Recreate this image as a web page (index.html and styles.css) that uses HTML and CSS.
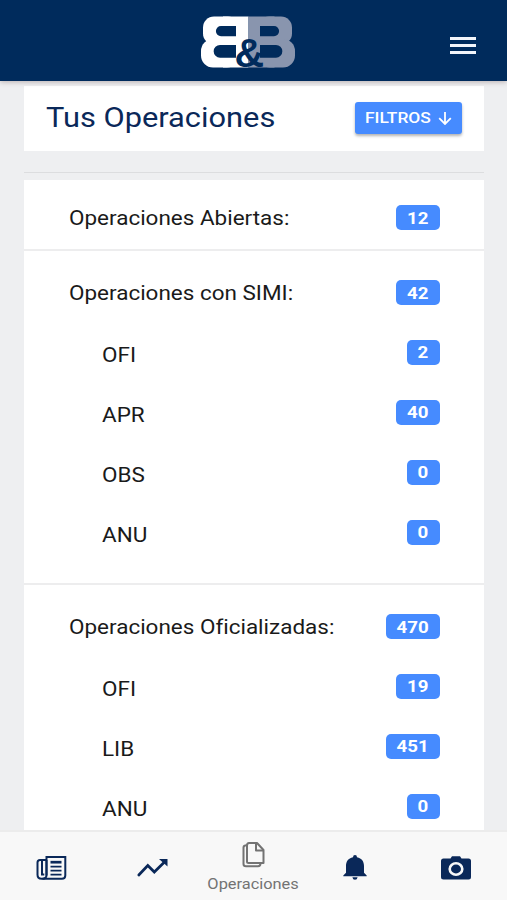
FILE: index.html
```html
<!DOCTYPE html>
<html lang="es">
<head>
<meta charset="utf-8">
<meta name="viewport" content="width=device-width, initial-scale=1">
<title>Tus Operaciones</title>
<link rel="stylesheet" href="styles.css">
</head>
<body>
<div class="app">
  <header class="header">
    <svg class="logo" viewBox="0 0 96 56" role="img" aria-label="B&amp;B">
      <g fill="#fff">
        <rect x="2" y="2.500" width="36" height="28" rx="11"/>
        <rect x="0" y="25" width="38" height="28.500" rx="12"/>
        <rect x="22" y="2.500" width="25.500" height="51"/>
      </g>
      <g fill="#8995ae">
        <rect x="57" y="2.500" width="34" height="28" rx="11"/>
        <rect x="57" y="25" width="37" height="28.500" rx="12"/>
        <rect x="47.500" y="2.500" width="26" height="51"/>
      </g>
      <g fill="#002b5c">
        <path d="M35 12H20a5 5 0 0 0 0 10.200h15zM35 31H19a6 6 0 0 0 0 12.700h16zM59 12H73a5 5 0 0 1 0 10.200H59zM59 31H75a6 6 0 0 1 0 12.700H59z"/>
      </g>
      <text class="logo-amp" x="33.500" y="53">&amp;</text>
    </svg>
    <button class="menu" aria-label="Menú"><span></span><span></span><span></span></button>
  </header>

  <main class="content">
    <section class="title-card">
      <h1><span class="wide">Tus Operaciones</span></h1>
      <button class="filter">
        <span class="filter-label"><span class="wide">FILTROS</span></span>
        <svg class="arrow" viewBox="0 0 14 14"><path d="M7 1v12M1.2 7.2 7 13l5.800-5.800"/></svg>
      </button>
    </section>
    <hr class="rule">
    <div class="list">
      <section class="group group-open">
        <div class="row head"><span class="wide">Operaciones Abiertas:</span><span class="badge two"><b class="wide">12</b></span></div>
      </section>
      <section class="group group-simi">
        <div class="row head"><span class="wide">Operaciones con SIMI:</span><span class="badge two"><b class="wide">42</b></span></div>
        <div class="row sub"><span class="wide">OFI</span><span class="badge one"><b class="wide">2</b></span></div>
        <div class="row sub"><span class="wide">APR</span><span class="badge two"><b class="wide">40</b></span></div>
        <div class="row sub"><span class="wide">OBS</span><span class="badge one"><b class="wide">0</b></span></div>
        <div class="row sub"><span class="wide">ANU</span><span class="badge one"><b class="wide">0</b></span></div>
      </section>
      <section class="group group-official">
        <div class="row head"><span class="wide">Operaciones Oficializadas:</span><span class="badge three"><b class="wide">470</b></span></div>
        <div class="row sub"><span class="wide">OFI</span><span class="badge two"><b class="wide">19</b></span></div>
        <div class="row sub"><span class="wide">LIB</span><span class="badge three"><b class="wide">451</b></span></div>
        <div class="row sub"><span class="wide">ANU</span><span class="badge one"><b class="wide">0</b></span></div>
      </section>
    </div>
  </main>

  <nav class="tabs">
    <a class="tab" aria-label="Noticias">
      <svg width="32" height="26" viewBox="0 0 32 26" fill="none" stroke="currentColor" stroke-width="2">
        <path d="M11.500 20.500V2h18.800v18.500q0 3.200-3.400 3.200H6.500q-4 0-4-4V7.500Q2.500 5 5 5h6.500"/>
        <path d="M7 5v14.500h2.300M11.500 5v15q0 3.700-4 3.700"/>
        <path d="M15.500 7.200h11" stroke-width="2.700"/>
        <path d="M15.500 11.700h11M15.500 15.700h11M15.500 19.700h11" stroke-width="1.700"/>
      </svg>
    </a>
    <a class="tab" aria-label="Tendencias">
      <svg width="32" height="26" viewBox="0 0 32 26">
        <path d="m2.800 20 9-9.500 6.500 6.500L28 7.500" fill="none" stroke="currentColor" stroke-width="2.700" stroke-linecap="round"/>
        <path d="M23 4h8.500v7.500z" fill="currentColor"/>
      </svg>
    </a>
    <a class="tab active">
      <svg width="26" height="28" viewBox="0 0 26 28" fill="none" stroke="currentColor" stroke-width="2" stroke-linejoin="round">
        <path d="M9 2H17l6.500 7v13H8.500q-1.500 0-1.500-1.500v-16Q7 2 9 2z"/>
        <path d="M16 2v7.500h7.500"/>
        <path d="M7 4.200Q3.500 4.200 3.500 6.500V23q0 2.300 2.500 2.300h12q2.500 0 2.500-3.300"/>
      </svg>
      <span class="tab-label"><span class="wide">Operaciones</span></span>
    </a>
    <a class="tab" aria-label="Notificaciones">
      <svg width="26" height="28" viewBox="0 0 26 28" fill="currentColor">
        <path d="M11 3.200q0-2.200 2-2.200t2 2.200c4.800 1 7 4.400 7 8.800v6.700l2.700 2.700v.8H1.300v-.8L4 18.700V12c0-4.400 2.200-7.800 7-8.800zM10.400 23.200h5.200q-.4 2.500-2.600 2.500t-2.600-2.500z"/>
      </svg>
    </a>
    <a class="tab" aria-label="Cámara">
      <svg width="32" height="26" viewBox="0 0 32 26">
        <path d="M3.500 3.500h7l1.500-2.200h8l1.500 2.200h7q2.500 0 2.500 2.500v16q0 2.500-2.500 2.500h-25Q1 24.500 1 22V6q0-2.500 2.500-2.500z" fill="currentColor"/>
        <ellipse cx="16" cy="14" rx="6.300" ry="5.700" fill="none" stroke="#f8f8f8" stroke-width="2.600"/>
      </svg>
    </a>
  </nav>
</div>
</body>
</html>
```

FILE: styles.css
```css
* { box-sizing: border-box; }

body {
  margin: 0;
  background: #eeeff1;
  font-family: Roboto, "Liberation Sans", sans-serif;
  font-variant-ligatures: none;
  color: #1a1a1a;
}

button {
  border: 0;
  padding: 0;
  font: inherit;
}

.app {
  display: flex;
  flex-direction: column;
  height: 900px;
  overflow: hidden;
}

.wide {
  display: inline-block;
  transform: scaleX(1.1);
  transform-origin: left center;
  white-space: nowrap;
}

.header {
  display: grid;
  grid-template-columns: 1fr 96px 1fr;
  align-items: center;
  flex: 0 0 81px;
  padding: 3px 31px 0 21px;
  background: #002b5c;
  box-shadow: 0 1px 5px rgba(60, 30, 30, .3);
  z-index: 1;
}

.logo {
  grid-column: 2;
  width: 96px;
  height: 56px;
  overflow: visible;
}

.logo-amp {
  font: bold 41px "Liberation Sans", sans-serif;
  fill: #002b5c;
}

.menu {
  justify-self: end;
  display: grid;
  gap: 4px;
  padding-top: 6px;
  background: none;
}

.menu span {
  width: 26px;
  height: 3px;
  background: #f2f5fa;
}

.content {
  flex: 1;
  min-height: 0;
  overflow: hidden;
  padding: 5px 23px 0 24px;
}

.title-card {
  display: flex;
  align-items: center;
  justify-content: space-between;
  height: 65px;
  padding: 0 22px 2px 22px;
  background: #fff;
}

h1 {
  margin: 0;
  font-size: 28px;
  font-weight: 400;
  line-height: 34px;
  color: #0a2859;
}

.filter {
  display: flex;
  align-items: center;
  justify-content: space-between;
  width: 107px;
  height: 32px;
  padding: 0 10px;
  border-radius: 3px;
  background: #468bff;
  color: #fff;
  font-size: 15px;
  font-weight: 500;
  box-shadow: 0 2px 3px rgba(0, 0, 0, .3);
}

.filter .wide { transform: scaleX(1.16); }

.arrow {
  width: 14px;
  height: 14px;
  fill: none;
  stroke: #fff;
  stroke-width: 1.8;
}

.rule {
  height: 1px;
  margin: 21px 0 7px;
  border: 0;
  background: #dcdddf;
}

.list { background: #fff; }

.group { border-bottom: 2px solid #ededee; }
.group-open { height: 71px; padding-top: 8px; }
.group-simi { height: 334px; padding-top: 12px; }
.group-official { padding-top: 12px; border-bottom: 0; }

.row {
  display: flex;
  align-items: center;
  justify-content: space-between;
  height: 60px;
  padding-right: 44.5px;
  font-size: 21px;
  line-height: 28px;
}

.row > .wide { transform: scaleX(1.07); }
.head { padding-left: 44.5px; }
.sub { padding-left: 78px; }
.head .badge { margin-bottom: 1px; }
.sub .badge { margin-bottom: 6px; }
.group .head + .sub { margin-top: 2px; }

.badge {
  display: flex;
  align-items: center;
  justify-content: center;
  height: 25px;
  border-radius: 5px;
  background: #468bff;
  color: #fff;
  font-size: 17px;
  line-height: 20px;
}

.badge .wide { transform-origin: center; }
.one { width: 33px; }
.two { width: 44px; }
.three { width: 54px; }

.tabs {
  display: grid;
  grid-template-columns: repeat(5, 1fr);
  flex: 0 0 70px;
  border-top: 2px solid #ececec;
  background: #f8f8f8;
}

.tab {
  display: flex;
  flex-direction: column;
  align-items: center;
  justify-content: center;
  padding-top: 4px;
  color: #0a2859;
}

.active {
  justify-content: flex-start;
  padding-top: 9px;
  color: #737373;
}

.tab-label {
  margin-top: 6px;
  font-size: 14px;
  line-height: 18px;
}

.tab-label .wide {
  transform: scaleX(1.17);
  transform-origin: center;
}
```
